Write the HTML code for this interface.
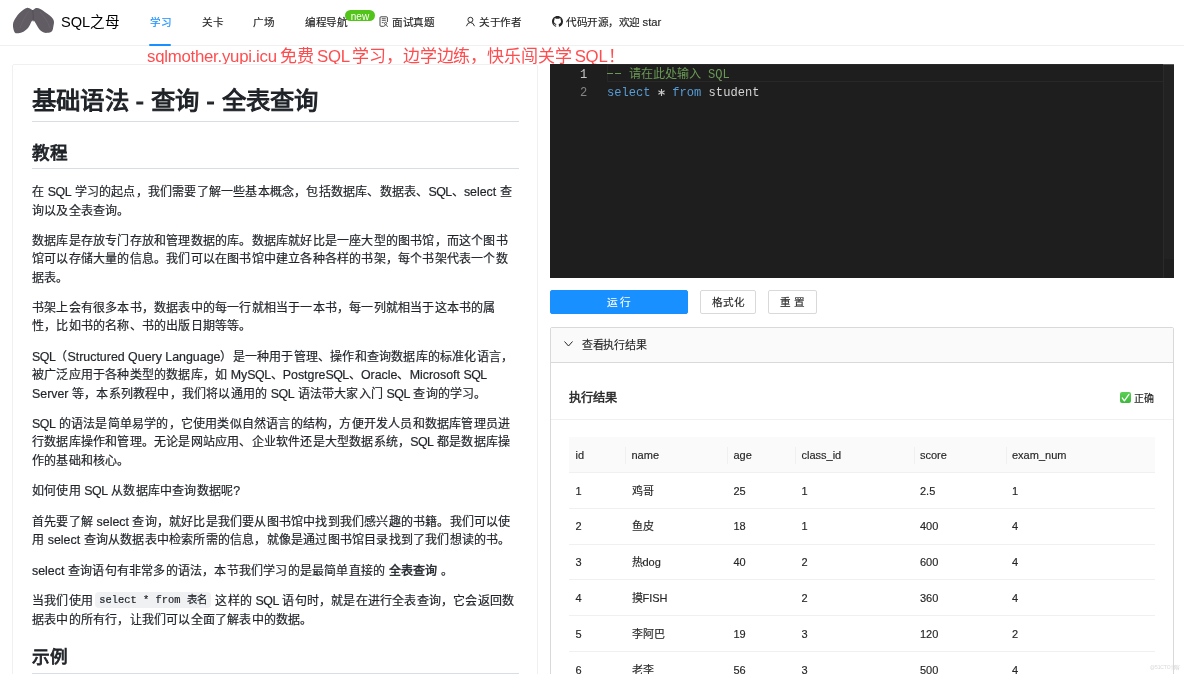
<!DOCTYPE html>
<html lang="zh-CN"><head><meta charset="utf-8">
<style>
*{box-sizing:border-box;margin:0;padding:0}
html,body{width:1184px;height:674px;overflow:hidden;background:#fff;font-family:"Liberation Sans",sans-serif;color:#1f2328}
.wrap{position:absolute;left:0;top:0;width:1184px;height:674px;will-change:transform}
.abs{position:absolute;white-space:nowrap}
#hdr{position:absolute;left:0;top:0;width:1184px;height:46px;border-bottom:1px solid #f0f0f0;background:#fff}
.nav{position:absolute;top:14px;-webkit-text-stroke:0.15px currentColor;font-size:10.6px;line-height:16px;color:#262626;white-space:nowrap;letter-spacing:-0.5px}
#slogan{position:absolute;left:147px;top:46px;font-size:17px;letter-spacing:-0.15px;line-height:22px;color:#ff4d4f;white-space:nowrap}
#slogan .l{font-size:16.8px;letter-spacing:-0.25px;word-spacing:-1.2px}
#left{position:absolute;left:12px;top:64px;width:526px;height:640px;border:1px solid #f0f0f0;border-radius:2px}
.md{position:absolute;left:32px;width:487px;white-space:nowrap}
.h1{font-size:24.4px;font-weight:normal;-webkit-text-stroke:1px #1f2328;letter-spacing:0.2px;line-height:30px;color:#1f2328}
.h2{font-size:17.6px;font-weight:normal;-webkit-text-stroke:0.85px #1f2328;line-height:24px;color:#1f2328}
.bd{position:absolute;left:32px;width:487px;height:1px;background:#d8dee4}
.p{-webkit-text-stroke:0.2px #1f2328;font-size:12px;letter-spacing:0.2px;line-height:18.3px;color:#1f2328}
.p .l{font-size:12.4px;letter-spacing:0px}
.p .q{letter-spacing:-0.5px}
b{font-weight:normal;-webkit-text-stroke:0.45px #1f2328}
code{position:relative;top:-1.8px;left:-1.2px;font-family:"Liberation Mono",monospace;font-size:10.4px;letter-spacing:0;background:rgba(175,184,193,0.2);border-radius:4px;padding:2px 4px}
#ed{position:absolute;left:550px;top:64px;width:624px;height:214px;background:#1e1e1e}
.ln{position:absolute;font-family:"Liberation Mono",monospace;font-size:12.1px;line-height:18px;white-space:nowrap}
.btn{position:absolute;-webkit-text-stroke:0.15px currentColor;top:290px;height:24px;font-size:10.6px;line-height:22px;text-align:center;border-radius:2px}
#pan{position:absolute;left:550px;top:327px;width:624px;height:400px;border:1px solid #d9d9d9;border-radius:2px}
#panh{position:absolute;left:0;top:0;width:622px;height:35px;background:#fafafa;border-bottom:1px solid #d9d9d9}
.td{position:absolute;-webkit-text-stroke:0.15px #262626;font-size:11px;line-height:16px;color:#262626;white-space:nowrap}
.rowb{position:absolute;left:569px;width:586px;height:1px;background:#f0f0f0}
</style></head><body><div class="wrap">
<div id="hdr">
  <svg class="abs" style="left:0;top:0" width="60" height="40" viewBox="0 0 60 40"><path d="M31.70 21.20 C31.12 21.97 30.45 23.95 29.70 25.20 C28.95 26.45 28.47 27.52 27.20 28.70 C25.93 29.88 23.87 31.53 22.10 32.30 C20.33 33.07 17.93 33.48 16.60 33.30 C15.27 33.12 14.70 32.72 14.10 31.20 C13.50 29.68 12.75 26.38 13.00 24.20 C13.25 22.02 14.33 20.12 15.60 18.10 C16.87 16.08 18.75 13.78 20.60 12.10 C22.45 10.42 25.02 8.52 26.70 8.00 C28.38 7.48 29.70 8.67 30.70 9.00 C31.70 9.33 31.77 10.17 32.70 10.00 C33.63 9.83 35.03 8.17 36.30 8.00 C37.57 7.83 38.63 8.15 40.30 9.00 C41.97 9.85 44.45 11.75 46.30 13.10 C48.15 14.45 50.13 15.75 51.40 17.10 C52.67 18.45 53.57 19.68 53.90 21.20 C54.23 22.72 53.73 24.53 53.40 26.20 C53.07 27.87 52.90 30.10 51.90 31.20 C50.90 32.30 48.83 32.62 47.40 32.80 C45.97 32.98 44.65 32.90 43.30 32.30 C41.95 31.70 40.38 30.38 39.30 29.20 C38.22 28.02 37.57 26.45 36.80 25.20 C36.03 23.95 35.30 22.47 34.70 21.70 C34.10 20.93 33.70 20.68 33.20 20.60 C32.70 20.52 32.28 20.43 31.70 21.20Z" fill="#615c64"/><path d="M32.7 10 C33.2 14 33.5 18 33.2 21.5" stroke="#4d4950" stroke-width="0.7" fill="none"/><path d="M20 28 C22 22 25 16 29 11 M40 12 C44 16 48 22 50 28" stroke="#6f6a72" stroke-width="0.6" fill="none"/></svg>
  <div class="abs" style="left:61px;top:12px;font-size:14.6px;line-height:20px;color:#000">SQL之母</div>
  <div class="nav" style="left:150px;color:#1890ff">学习</div>
  <div class="abs" style="left:149px;top:44px;width:22px;height:2px;background:#1890ff;border-radius:1px"></div>
  <div class="nav" style="left:202px">关卡</div>
  <div class="nav" style="left:253px">广场</div>
  <div class="nav" style="left:305px">编程导航</div>
  <div class="abs" style="left:345px;top:10px;width:30px;height:11px;background:#52c41a;border-radius:6px;color:#fff;font-size:10px;line-height:13px;text-align:center">new</div>
  <div class="nav" style="left:379px">
    <svg style="position:absolute;left:-1px;top:1px" width="12" height="13" viewBox="378 15 12 13"><path d="M383.4 26.3H381a1 1 0 0 1-1-1V17.8a1 1 0 0 1 1-1h5.4a1 1 0 0 1 1 1V22" stroke="#333" stroke-width="0.9" fill="none"/><path d="M381.8 18.7h4M381.8 20.4h4M381.8 22.6h1.8" stroke="#333" stroke-width="0.8" fill="none"/><circle cx="385.6" cy="23.4" r="1.1" stroke="#333" stroke-width="0.8" fill="none"/><path d="M383.7 26.9c.3-1.3 1-1.9 1.9-1.9s1.6.6 1.9 1.9" stroke="#333" stroke-width="0.8" fill="none"/></svg>
    <span style="position:absolute;left:13px">面试真题</span></div>
  <div class="nav" style="left:466px">
    <svg style="position:absolute;left:-1px;top:1px" width="11" height="13" viewBox="465 15 11 13"><circle cx="470.4" cy="19.8" r="2.5" stroke="#262626" stroke-width="0.95" fill="none"/><path d="M466.4 26.2Q467.4 22.5 470.4 22.5Q473.4 22.5 474.5 26.2" stroke="#262626" stroke-width="0.95" fill="none"/></svg>
    <span style="position:absolute;left:13px">关于作者</span></div>
  <div class="nav" style="left:552px">
    <svg style="position:absolute;left:0;top:1.5px" width="11" height="11" viewBox="0 0 16 16"><path fill="#262626" d="M8 0C3.58 0 0 3.58 0 8c0 3.54 2.29 6.53 5.47 7.59.4.07.55-.17.55-.38 0-.19-.01-.82-.01-1.49-2.01.37-2.53-.49-2.69-.94-.09-.23-.48-.94-.82-1.13-.28-.15-.68-.52-.01-.53.63-.01 1.08.58 1.23.82.72 1.21 1.87.87 2.33.66.07-.52.28-.87.51-1.07-1.78-.2-3.64-.89-3.64-3.95 0-.87.31-1.59.82-2.15-.08-.2-.36-1.02.08-2.12 0 0 .67-.21 2.2.82.64-.18 1.32-.27 2-.27.68 0 1.36.09 2 .27 1.53-1.04 2.2-.82 2.2-.82.44 1.1.16 1.92.08 2.12.51.56.82 1.27.82 2.15 0 3.07-1.87 3.75-3.65 3.95.29.25.54.73.54 1.48 0 1.07-.01 1.93-.01 2.2 0 .21.15.46.55.38A8.013 8.013 0 0016 8c0-4.42-3.58-8-8-8z"/></svg>
    <span style="position:absolute;left:14px">代码开源，欢迎<span style="letter-spacing:0;font-size:11.2px"> star</span></span></div>
</div>
<div id="slogan"><span class="l">sqlmother.yupi.icu</span><span class="l"> </span>免费<span class="l"> SQL </span>学习，边学边练，快乐闯关学<span class="l"> SQL</span>！</div>

<div id="left"></div>
<div class="md h1" style="top:85.5px">基础语法 - 查询 - 全表查询</div>
<div class="bd" style="top:121px"></div>
<div class="md h2" style="top:140.5px">教程</div>
<div class="bd" style="top:168px"></div>
<div class="md p" style="top:183.3px">在 <span class="l"><span class="q">SQL</span></span> 学习的起点，我们需要了解一些基本概念，包括数据库、数据表、<span class="l"><span class="q">SQL</span></span>、<span class="l">select</span> 查<br>询以及全表查询。</div>
<div class="md p" style="top:232.1px">数据库是存放专门存放和管理数据的库。数据库就好比是一座大型的图书馆，而这个图书<br>馆可以存储大量的信息。我们可以在图书馆中建立各种各样的书架，每个书架代表一个数<br>据表。</div>
<div class="md p" style="top:299.2px">书架上会有很多本书，数据表中的每一行就相当于一本书，每一列就相当于这本书的属<br>性，比如书的名称、书的出版日期等等。</div>
<div class="md p" style="top:348.0px"><span class="l"><span class="q">SQL</span></span>（<span class="l">Structured Query Language</span>）是一种用于管理、操作和查询数据库的标准化语言，<br>被广泛应用于各种类型的数据库，如 <span class="l">My<span class="q">SQL</span></span>、<span class="l">Postgre<span class="q">SQL</span></span>、<span class="l">Oracle</span>、<span class="l">Microsoft <span class="q">SQL</span></span><br><span class="l">Server</span> 等，本系列教程中，我们将以通用的 <span class="l"><span class="q">SQL</span></span> 语法带大家入门 <span class="l"><span class="q">SQL</span></span> 查询的学习。</div>
<div class="md p" style="top:415.1px"><span class="l"><span class="q">SQL</span></span> 的语法是简单易学的，它使用类似自然语言的结构，方便开发人员和数据库管理员进<br>行数据库操作和管理。无论是网站应用、企业软件还是大型数据系统，<span class="l"><span class="q">SQL</span></span> 都是数据库操<br>作的基础和核心。</div>
<div class="md p" style="top:482.2px">如何使用 <span class="l"><span class="q">SQL</span></span> 从数据库中查询数据呢<span class="l">?</span></div>
<div class="md p" style="top:512.7px">首先要了解 <span class="l">select</span> 查询，就好比是我们要从图书馆中找到我们感兴趣的书籍。我们可以使<br>用 <span class="l">select</span> 查询从数据表中检索所需的信息，就像是通过图书馆目录找到了我们想读的书。</div>
<div class="md p" style="top:561.5px"><span class="l">select</span> 查询语句有非常多的语法，本节我们学习的是最简单直接的 <b>全表查询</b> 。</div>
<div class="md p" style="top:592.0px">当我们使用 <code>select * from 表名</code> 这样的 <span class="l"><span class="q">SQL</span></span> 语句时，就是在进行全表查询，它会返回数<br>据表中的所有行，让我们可以全面了解表中的数据。</div>

<div class="md h2" style="top:645px">示例</div>
<div class="bd" style="top:673px"></div>

<div id="ed">
  <div class="abs" style="left:57px;top:0;width:567px;height:18px;border:1px solid #282828;border-right:0"></div>
  <div class="abs" style="left:613px;top:0;width:11px;height:195px;background:#222;border-left:1px solid #2a2a2a"></div><div class="abs" style="left:613px;top:195px;width:11px;height:19px;background:#1e1e1e;border-left:1px solid #2a2a2a"></div><div class="abs" style="left:613px;top:0;width:11px;height:1px;background:#5a5a5a"></div>
  <div class="ln" style="left:30px;top:1.5px;color:#c6c6c6">1</div>
  <div class="ln" style="left:30px;top:19.5px;color:#858585">2</div>
  <div class="ln" style="left:57px;top:1.5px;color:#6a9955">&nbsp;&nbsp;&nbsp;请在此处输入 SQL</div><div class="abs" style="left:57px;top:9px;width:6.4px;height:1.1px;background:#6a9955"></div><div class="abs" style="left:64.5px;top:9px;width:6.4px;height:1.1px;background:#6a9955"></div>
  <div class="ln" style="left:57px;top:19.5px;color:#d4d4d4"><span style="color:#569cd6">select</span>&nbsp;&nbsp;&nbsp;<span style="color:#569cd6">from</span> student</div><svg class="abs" style="left:107px;top:24px" width="9" height="9" viewBox="-4.5 -4.5 9 9"><path d="M0 -3.6V3.6M-3.1 -1.8L3.1 1.8M-3.1 1.8L3.1 -1.8" stroke="#c8c8c8" stroke-width="1.1"/></svg>
</div>

<div class="btn" style="left:550px;width:138px;background:#1890ff;color:#fff;border:1px solid #1890ff">运 行</div>
<div class="btn" style="left:700px;width:56px;background:#fff;color:#262626;border:1px solid #d9d9d9">格式化</div>
<div class="btn" style="left:768px;width:49px;background:#fff;color:#262626;border:1px solid #d9d9d9">重 置</div>

<div id="pan"><div id="panh"></div></div>
<svg class="abs" style="left:564px;top:341px" width="9" height="6" viewBox="0 0 9 6"><path d="M0.5 0.5L4.5 5L8.5 0.5" stroke="#262626" stroke-width="1" fill="none"/></svg>
<div class="td" style="left:582px;top:337px;letter-spacing:-0.3px">查看执行结果</div>
<div class="abs" style="left:551px;top:419px;width:622px;height:1px;background:#f0f0f0"></div>
<div class="td" style="left:569px;top:390px;font-size:12.2px;-webkit-text-stroke:0.45px #262626;color:#262626">执行结果</div>
<div class="abs" style="left:1120px;top:391.5px;width:11px;height:11px;background:linear-gradient(#5ccf55,#3cb93a);border-radius:2px"></div>
<svg class="abs" style="left:1120px;top:391.5px" width="11" height="11" viewBox="0 0 11 11"><path d="M2.2 5.9L4.4 8.8L8.9 2.4" stroke="#fff" stroke-width="1.3" fill="none" stroke-linecap="round" stroke-linejoin="round"/></svg>
<div class="td" style="left:1134px;top:390.8px;font-size:10px">正确</div>

<div class="abs" style="left:569px;top:437px;width:586px;height:36px;background:#fafafa;border-bottom:1px solid #f0f0f0"></div>
<div class="abs" style="left:625px;top:447px;width:1px;height:17px;background:#f0f0f0"></div>
<div class="abs" style="left:727px;top:447px;width:1px;height:17px;background:#f0f0f0"></div>
<div class="abs" style="left:795px;top:447px;width:1px;height:17px;background:#f0f0f0"></div>
<div class="abs" style="left:913.5px;top:447px;width:1px;height:17px;background:#f0f0f0"></div>
<div class="abs" style="left:1005.5px;top:447px;width:1px;height:17px;background:#f0f0f0"></div>
<div class="td" style="left:575.5px;top:447px">id</div>
<div class="td" style="left:631.5px;top:447px">name</div>
<div class="td" style="left:733.5px;top:447px">age</div>
<div class="td" style="left:801.5px;top:447px">class_id</div>
<div class="td" style="left:920px;top:447px">score</div>
<div class="td" style="left:1012px;top:447px">exam_num</div>
<div class="td" style="left:575.5px;top:482.5px">1</div>
<div class="td" style="left:631.5px;top:482.5px">鸡哥</div>
<div class="td" style="left:733.5px;top:482.5px">25</div>
<div class="td" style="left:801.5px;top:482.5px">1</div>
<div class="td" style="left:920px;top:482.5px">2.5</div>
<div class="td" style="left:1012px;top:482.5px">1</div>
<div class="rowb" style="top:507.8px"></div>
<div class="td" style="left:575.5px;top:518.3px">2</div>
<div class="td" style="left:631.5px;top:518.3px">鱼皮</div>
<div class="td" style="left:733.5px;top:518.3px">18</div>
<div class="td" style="left:801.5px;top:518.3px">1</div>
<div class="td" style="left:920px;top:518.3px">400</div>
<div class="td" style="left:1012px;top:518.3px">4</div>
<div class="rowb" style="top:543.6px"></div>
<div class="td" style="left:575.5px;top:554.1px">3</div>
<div class="td" style="left:631.5px;top:554.1px">热dog</div>
<div class="td" style="left:733.5px;top:554.1px">40</div>
<div class="td" style="left:801.5px;top:554.1px">2</div>
<div class="td" style="left:920px;top:554.1px">600</div>
<div class="td" style="left:1012px;top:554.1px">4</div>
<div class="rowb" style="top:579.4px"></div>
<div class="td" style="left:575.5px;top:589.9px">4</div>
<div class="td" style="left:631.5px;top:589.9px">摸FISH</div>
<div class="td" style="left:801.5px;top:589.9px">2</div>
<div class="td" style="left:920px;top:589.9px">360</div>
<div class="td" style="left:1012px;top:589.9px">4</div>
<div class="rowb" style="top:615.2px"></div>
<div class="td" style="left:575.5px;top:625.7px">5</div>
<div class="td" style="left:631.5px;top:625.7px">李阿巴</div>
<div class="td" style="left:733.5px;top:625.7px">19</div>
<div class="td" style="left:801.5px;top:625.7px">3</div>
<div class="td" style="left:920px;top:625.7px">120</div>
<div class="td" style="left:1012px;top:625.7px">2</div>
<div class="rowb" style="top:651.0px"></div>
<div class="td" style="left:575.5px;top:661.5px">6</div>
<div class="td" style="left:631.5px;top:661.5px">老李</div>
<div class="td" style="left:733.5px;top:661.5px">56</div>
<div class="td" style="left:801.5px;top:661.5px">3</div>
<div class="td" style="left:920px;top:661.5px">500</div>
<div class="td" style="left:1012px;top:661.5px">4</div>
<div class="rowb" style="top:686.8px"></div>

<div class="abs" style="left:1150px;top:663px;font-size:5px;letter-spacing:-0.1px;line-height:8px;color:#d8d8d8">@51CTO博客</div>
</div></body></html>
